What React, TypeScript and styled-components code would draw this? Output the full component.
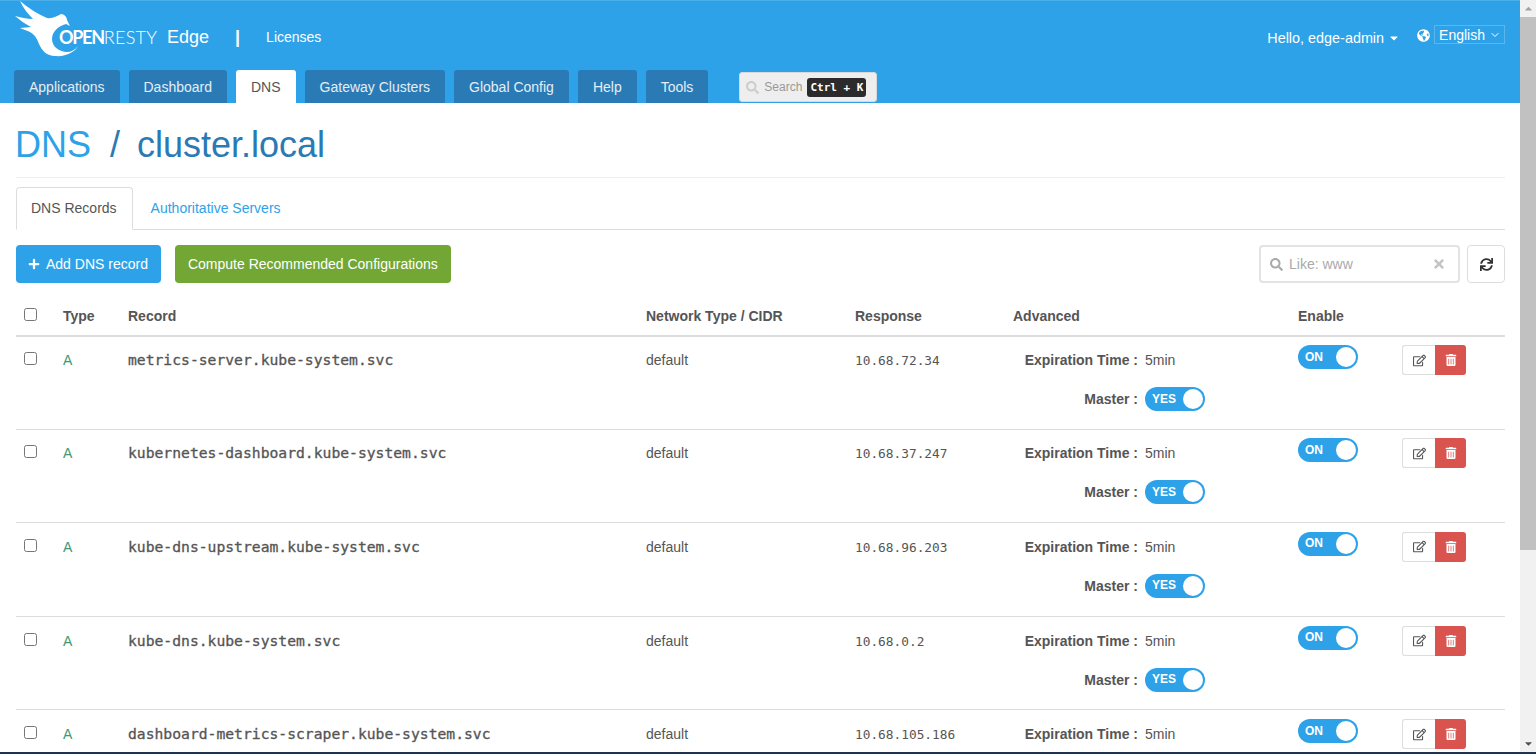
import * as React from "react";
import styled, { createGlobalStyle } from "styled-components";
import { FaPlus, FaSearch, FaTimes, FaSync, FaRegEdit, FaTrashAlt, FaGlobeAmericas, FaCaretDown, FaCaretUp } from "react-icons/fa";
import { FiChevronDown } from "react-icons/fi";

const GlobalStyle = createGlobalStyle`
  html, body {
    margin: 0;
    padding: 0;
    background: #fff;
    color: #555;
    font-family: "Liberation Sans", Arial, sans-serif;
    font-size: 14px;
  }
  * { box-sizing: border-box; }
`;

const Shell = styled.div`
  height: 100vh;
  display: flex;
  flex-direction: column;
  overflow: hidden;
`;

const Viewport = styled.div`
  flex: 1;
  min-height: 0;
  display: flex;
  overflow: hidden;
`;

const WindowEdge = styled.div`
  height: 2px;
  flex-shrink: 0;
  background: #1c3450;
`;

const Page = styled.div`
  flex: 1;
  min-width: 0;
`;

const ScrollTrack = styled.div`
  width: 16px;
  flex-shrink: 0;
  background: #f1f1f1;
  display: flex;
  flex-direction: column;
  color: #a3a3a3;
`;

const ScrollArrow = styled.span<{ $down?: boolean }>`
  height: 17px;
  display: flex;
  align-items: center;
  justify-content: center;
  color: ${(p) => (p.$down ? "#505050" : "#a3a3a3")};
`;

const ScrollThumb = styled.span`
  height: 533px;
  background: #c1c1c1;
  margin-bottom: auto;
`;

const Header = styled.header`
  height: 103px;
  background: #2ea2e8;
  border-top: 1px solid #4aaeea;
  display: flex;
  flex-direction: column;
`;

const TopBar = styled.div`
  height: 69px;
  padding: 4px 15px 0;
  display: flex;
  align-items: center;
  color: #fff;
`;

const LogoWrap = styled.div`
  position: relative;
  width: 144px;
  height: 56px;
  margin-top: -18px;
`;

const LogoText = styled.span`
  position: absolute;
  left: 44px;
  top: 26px;
  font-family: Lato, "Liberation Sans", sans-serif;
  font-size: 18px;
  line-height: 20px;
  font-weight: 300;
  letter-spacing: 0.3px;
  color: #fff;
  white-space: nowrap;
  b { font-weight: 700; letter-spacing: -1.3px; }
`;

const Brand = styled.span`
  font-size: 18px;
  margin-left: 8px;
`;

const Divider = styled.span`
  font-size: 18px;
  font-weight: 700;
  margin-left: 26px;
`;

const TopLink = styled.span`
  margin: -1px 0 0 26px;
  font-size: 14px;
`;

const TopRight = styled.div`
  margin-left: auto;
  display: flex;
  align-items: center;
`;

const Hello = styled.span`
  display: flex;
  align-items: center;
  gap: 4px;
  margin-right: 17px;
  font-size: 14.4px;
`;

const Globe = styled(FaGlobeAmericas)`
  margin-top: -4px;
`;

const LangSelect = styled.span`
  display: flex;
  align-items: center;
  gap: 4px;
  height: 19px;
  padding: 0 3px 0 4px;
  margin-left: 4px;
  margin-top: -6px;
  border: 1px solid #5ab6ee;
  font-size: 14px;
`;

const NavBar = styled.nav`
  height: 33px;
  padding-left: 14px;
  display: flex;
  align-items: flex-end;
  gap: 9px;
`;

const NavTab = styled.a<{ $active?: boolean }>`
  height: 33px;
  padding: 0 15px;
  display: flex;
  align-items: center;
  border-radius: 3px 3px 0 0;
  font-size: 14px;
  background: ${(p) => (p.$active ? "#fff" : "#2a7ab5")};
  color: ${(p) => (p.$active ? "#555" : "#e4eef6")};
`;

const SearchPill = styled.div`
  width: 138px;
  height: 30px;
  margin: 0 0 1px 22px;
  background: #eee;
  border: 1px solid #d9d9d9;
  border-radius: 3px;
  display: flex;
  align-items: center;
  padding-left: 6px;
  gap: 5px;
  font-size: 12px;
  color: #999;
  svg { color: #ccc; }
`;

const Kbd = styled.kbd`
  background: #2b2b2b;
  color: #fff;
  border-radius: 3px;
  font-family: "DejaVu Sans Mono", monospace;
  font-weight: 700;
  font-size: 11px;
  padding: 2px 3px;
  line-height: 15px;
`;

const Main = styled.main`
  padding: 0 15px 0 16px;
`;

const PageTitle = styled.h1`
  margin: 0;
  height: 75px;
  padding-top: 20px;
  border-bottom: 1px solid #eee;
  font-size: 36px;
  line-height: 44px;
  font-weight: 400;
  text-indent: -1px;
  color: #2a7ab5;
`;

const TitleRoot = styled.span`
  color: #2ea2e8;
`;

const TitleSep = styled.span`
  margin: 0 17px 0 19px;
`;

const SubTabs = styled.div`
  margin-top: 9px;
  height: 43px;
  border-bottom: 1px solid #ddd;
  display: flex;
`;

const SubTab = styled.a<{ $active?: boolean }>`
  height: 43px;
  padding: 0 15px 2px;
  display: flex;
  align-items: center;
  font-size: 14px;
  border-radius: 4px 4px 0 0;
  ${(p) =>
    p.$active
      ? "padding-left:14px;margin-right:3px;background:#fff;color:#555;border:1px solid #ddd;border-bottom-color:#fff;"
      : "color:#2ea2e8;"}
`;

const Toolbar = styled.div`
  margin-top: 15px;
  height: 38px;
  display: flex;
  align-items: center;
  gap: 14px;
`;

const Button = styled.button<{ $bg: string }>`
  height: 38px;
  padding: 0 12px;
  border: 1px solid transparent;
  border-radius: 4px;
  background: ${(p) => p.$bg};
  color: #fff;
  font: inherit;
  display: flex;
  align-items: center;
  gap: 6px;
`;

const AddButton = styled(Button)`
  padding-left: 11px;
`;

const FilterBox = styled.div`
  margin-left: auto;
  width: 201px;
  height: 38px;
  border: 2px solid #e3e3e3;
  border-radius: 4px;
  display: flex;
  align-items: center;
  padding: 0 12px 0 9px;
  gap: 6px;
  color: #aaa;
  svg:last-child { margin-left: auto; color: #c4c4c4; }
`;

const IconButton = styled.button`
  width: 38px;
  height: 38px;
  margin-left: -7px;
  border: 1px solid #ddd;
  border-radius: 4px;
  background: #fff;
  color: #333;
  display: flex;
  align-items: center;
  justify-content: center;
`;

const Table = styled.table`
  width: 100%;
  margin-top: 15px;
  border-collapse: collapse;
  table-layout: fixed;
`;

const Th = styled.th<{ $w?: number }>`
  ${(p) => (p.$w ? `width: ${p.$w}px;` : "")}
  height: 37.6px;
  padding: 0;
  text-align: left;
  font-size: 14px;
  color: #555;
  border-bottom: 2px solid #ddd;
`;

const Row = styled.tr`
  border-bottom: 1px solid #ddd;
`;

const Td = styled.td`
  height: 93.6px;
  padding: 13.7px 0 0;
  vertical-align: top;
  font-size: 14px;
  line-height: 20px;
`;

const ControlsTd = styled(Td)`
  padding-top: 8.7px;
`;

const Check = styled.span`
  display: block;
  width: 13px;
  height: 13px;
  margin-left: 8px;
  border: 1px solid #767676;
  border-radius: 2.5px;
  background: #fff;
`;

const HeadCheck = styled(Check)`
  margin-bottom: 4px;
`;

const RowCheck = styled(Check)`
  margin-top: 2px;
`;

const TypeTag = styled.span`
  color: #3d9970;
`;

const RecordName = styled.span`
  font-family: "DejaVu Sans Mono", monospace;
  font-size: 14.7px;
  color: #555;
  -webkit-text-stroke: 0.3px #555;
`;

const Ip = styled.span`
  font-family: "DejaVu Sans Mono", monospace;
  font-size: 12.8px;
`;

const Advanced = styled.div`
  width: 193px;
  display: grid;
  grid-template-columns: 125px auto;
  column-gap: 7px;
  row-gap: 17px;
  align-items: center;
`;

const AdvLabel = styled.b`
  text-align: right;
  white-space: nowrap;
`;

const Toggle = styled.span`
  position: relative;
  flex-shrink: 0;
  display: flex;
  align-items: center;
  width: 60px;
  height: 24px;
  border-radius: 12px;
  background: #2ea2e8;
  padding: 0 0 1px 7px;
  color: #fff;
  font-size: 12px;
  font-weight: 700;
  &::after {
    content: "";
    position: absolute;
    right: 2px;
    top: 2px;
    width: 20px;
    height: 20px;
    border-radius: 50%;
    background: #fff;
  }
`;

const EnableCell = styled.div`
  display: flex;
`;

const Actions = styled.div`
  display: flex;
  margin-left: 44px;
`;

const EditBtn = styled.span`
  width: 33px;
  height: 30px;
  border: 1px solid #ddd;
  border-right: 0;
  border-radius: 3px 0 0 3px;
  display: flex;
  align-items: center;
  justify-content: center;
  color: #555;
`;

const DeleteBtn = styled.span`
  width: 31px;
  height: 30px;
  background: #d9534f;
  border-radius: 0 3px 3px 0;
  display: flex;
  align-items: center;
  justify-content: center;
  color: #fff;
`;

const BirdSvg = styled.svg`
  position: absolute;
  left: 0;
  top: 0;
`;

const Bird = () => (
  <BirdSvg width="70" height="56" viewBox="15 0 70 56">
    <path
      fill="#fff"
      d="M20 0 C28 7 38 13 47 17 C52 18 57 15 61 13 C64 13 67 16 67 19 L70 25 L66 23 C58 25 52 31 52 38 C52 46 60 51 67 51 C71 51 75 49 78 45 C75 51 66 56 55 55 C47 55 42 50 39 43 C37 37 34 33 30 31 C27 30 23 28 20 27 C24 27 28 26 31 26 C25 23 20 19 15 15 C20 16 27 18 33 18 C28 13 23 7 20 0 Z"
    />
  </BirdSvg>
);

const records = [
  { name: "metrics-server.kube-system.svc", ip: "10.68.72.34" },
  { name: "kubernetes-dashboard.kube-system.svc", ip: "10.68.37.247" },
  { name: "kube-dns-upstream.kube-system.svc", ip: "10.68.96.203" },
  { name: "kube-dns.kube-system.svc", ip: "10.68.0.2" },
  { name: "dashboard-metrics-scraper.kube-system.svc", ip: "10.68.105.186" },
];

const navItems = ["Applications", "Dashboard", "DNS", "Gateway Clusters", "Global Config", "Help", "Tools"];

export default function App() {
  return (
    <Shell>
      <GlobalStyle />
      <Viewport>
        <Page>
          <Header>
            <TopBar>
              <LogoWrap>
                <Bird />
                <LogoText>
                  <b>OPEN</b>RESTY
                </LogoText>
              </LogoWrap>
              <Brand>Edge</Brand>
              <Divider>|</Divider>
              <TopLink>Licenses</TopLink>
              <TopRight>
                <Hello>
                  Hello, edge-admin <FaCaretDown size={12} />
                </Hello>
                <Globe size={13} />
                <LangSelect>
                  English <FiChevronDown size={12} />
                </LangSelect>
              </TopRight>
            </TopBar>
            <NavBar>
              {navItems.map((item) => (
                <NavTab key={item} $active={item === "DNS"}>
                  {item}
                </NavTab>
              ))}
              <SearchPill>
                <FaSearch size={13} />
                Search
                <Kbd>Ctrl + K</Kbd>
              </SearchPill>
            </NavBar>
          </Header>
          <Main>
            <PageTitle>
              <TitleRoot>DNS</TitleRoot>
              <TitleSep>/</TitleSep>
              cluster.local
            </PageTitle>
            <SubTabs>
              <SubTab $active>DNS Records</SubTab>
              <SubTab>Authoritative Servers</SubTab>
            </SubTabs>
            <Toolbar>
              <AddButton $bg="#2ea2e8">
                <FaPlus size={12} /> Add DNS record
              </AddButton>
              <Button $bg="#72a736">Compute Recommended Configurations</Button>
              <FilterBox>
                <FaSearch size={13} />
                Like: www
                <FaTimes size={14} />
              </FilterBox>
              <IconButton>
                <FaSync size={13} />
              </IconButton>
            </Toolbar>
            <Table>
              <thead>
                <tr>
                  <Th $w={47}>
                    <HeadCheck />
                  </Th>
                  <Th $w={65}>Type</Th>
                  <Th $w={518}>Record</Th>
                  <Th $w={209}>Network Type / CIDR</Th>
                  <Th $w={158}>Response</Th>
                  <Th $w={285}>Advanced</Th>
                  <Th>Enable</Th>
                </tr>
              </thead>
              <tbody>
                {records.map((r) => (
                  <Row key={r.name}>
                    <Td>
                      <RowCheck />
                    </Td>
                    <Td>
                      <TypeTag>A</TypeTag>
                    </Td>
                    <Td>
                      <RecordName>{r.name}</RecordName>
                    </Td>
                    <Td>default</Td>
                    <Td>
                      <Ip>{r.ip}</Ip>
                    </Td>
                    <Td>
                      <Advanced>
                        <AdvLabel>Expiration Time :</AdvLabel>
                        <span>5min</span>
                        <AdvLabel>Master :</AdvLabel>
                        <Toggle>YES</Toggle>
                      </Advanced>
                    </Td>
                    <ControlsTd>
                      <EnableCell>
                        <Toggle>ON</Toggle>
                        <Actions>
                          <EditBtn>
                            <FaRegEdit size={13} />
                          </EditBtn>
                          <DeleteBtn>
                            <FaTrashAlt size={12} />
                          </DeleteBtn>
                        </Actions>
                      </EnableCell>
                    </ControlsTd>
                  </Row>
                ))}
              </tbody>
            </Table>
          </Main>
        </Page>
        <ScrollTrack>
          <ScrollArrow>
            <FaCaretUp size={11} />
          </ScrollArrow>
          <ScrollThumb />
          <ScrollArrow $down>
            <FaCaretDown size={11} />
          </ScrollArrow>
        </ScrollTrack>
      </Viewport>
      <WindowEdge />
    </Shell>
  );
}
